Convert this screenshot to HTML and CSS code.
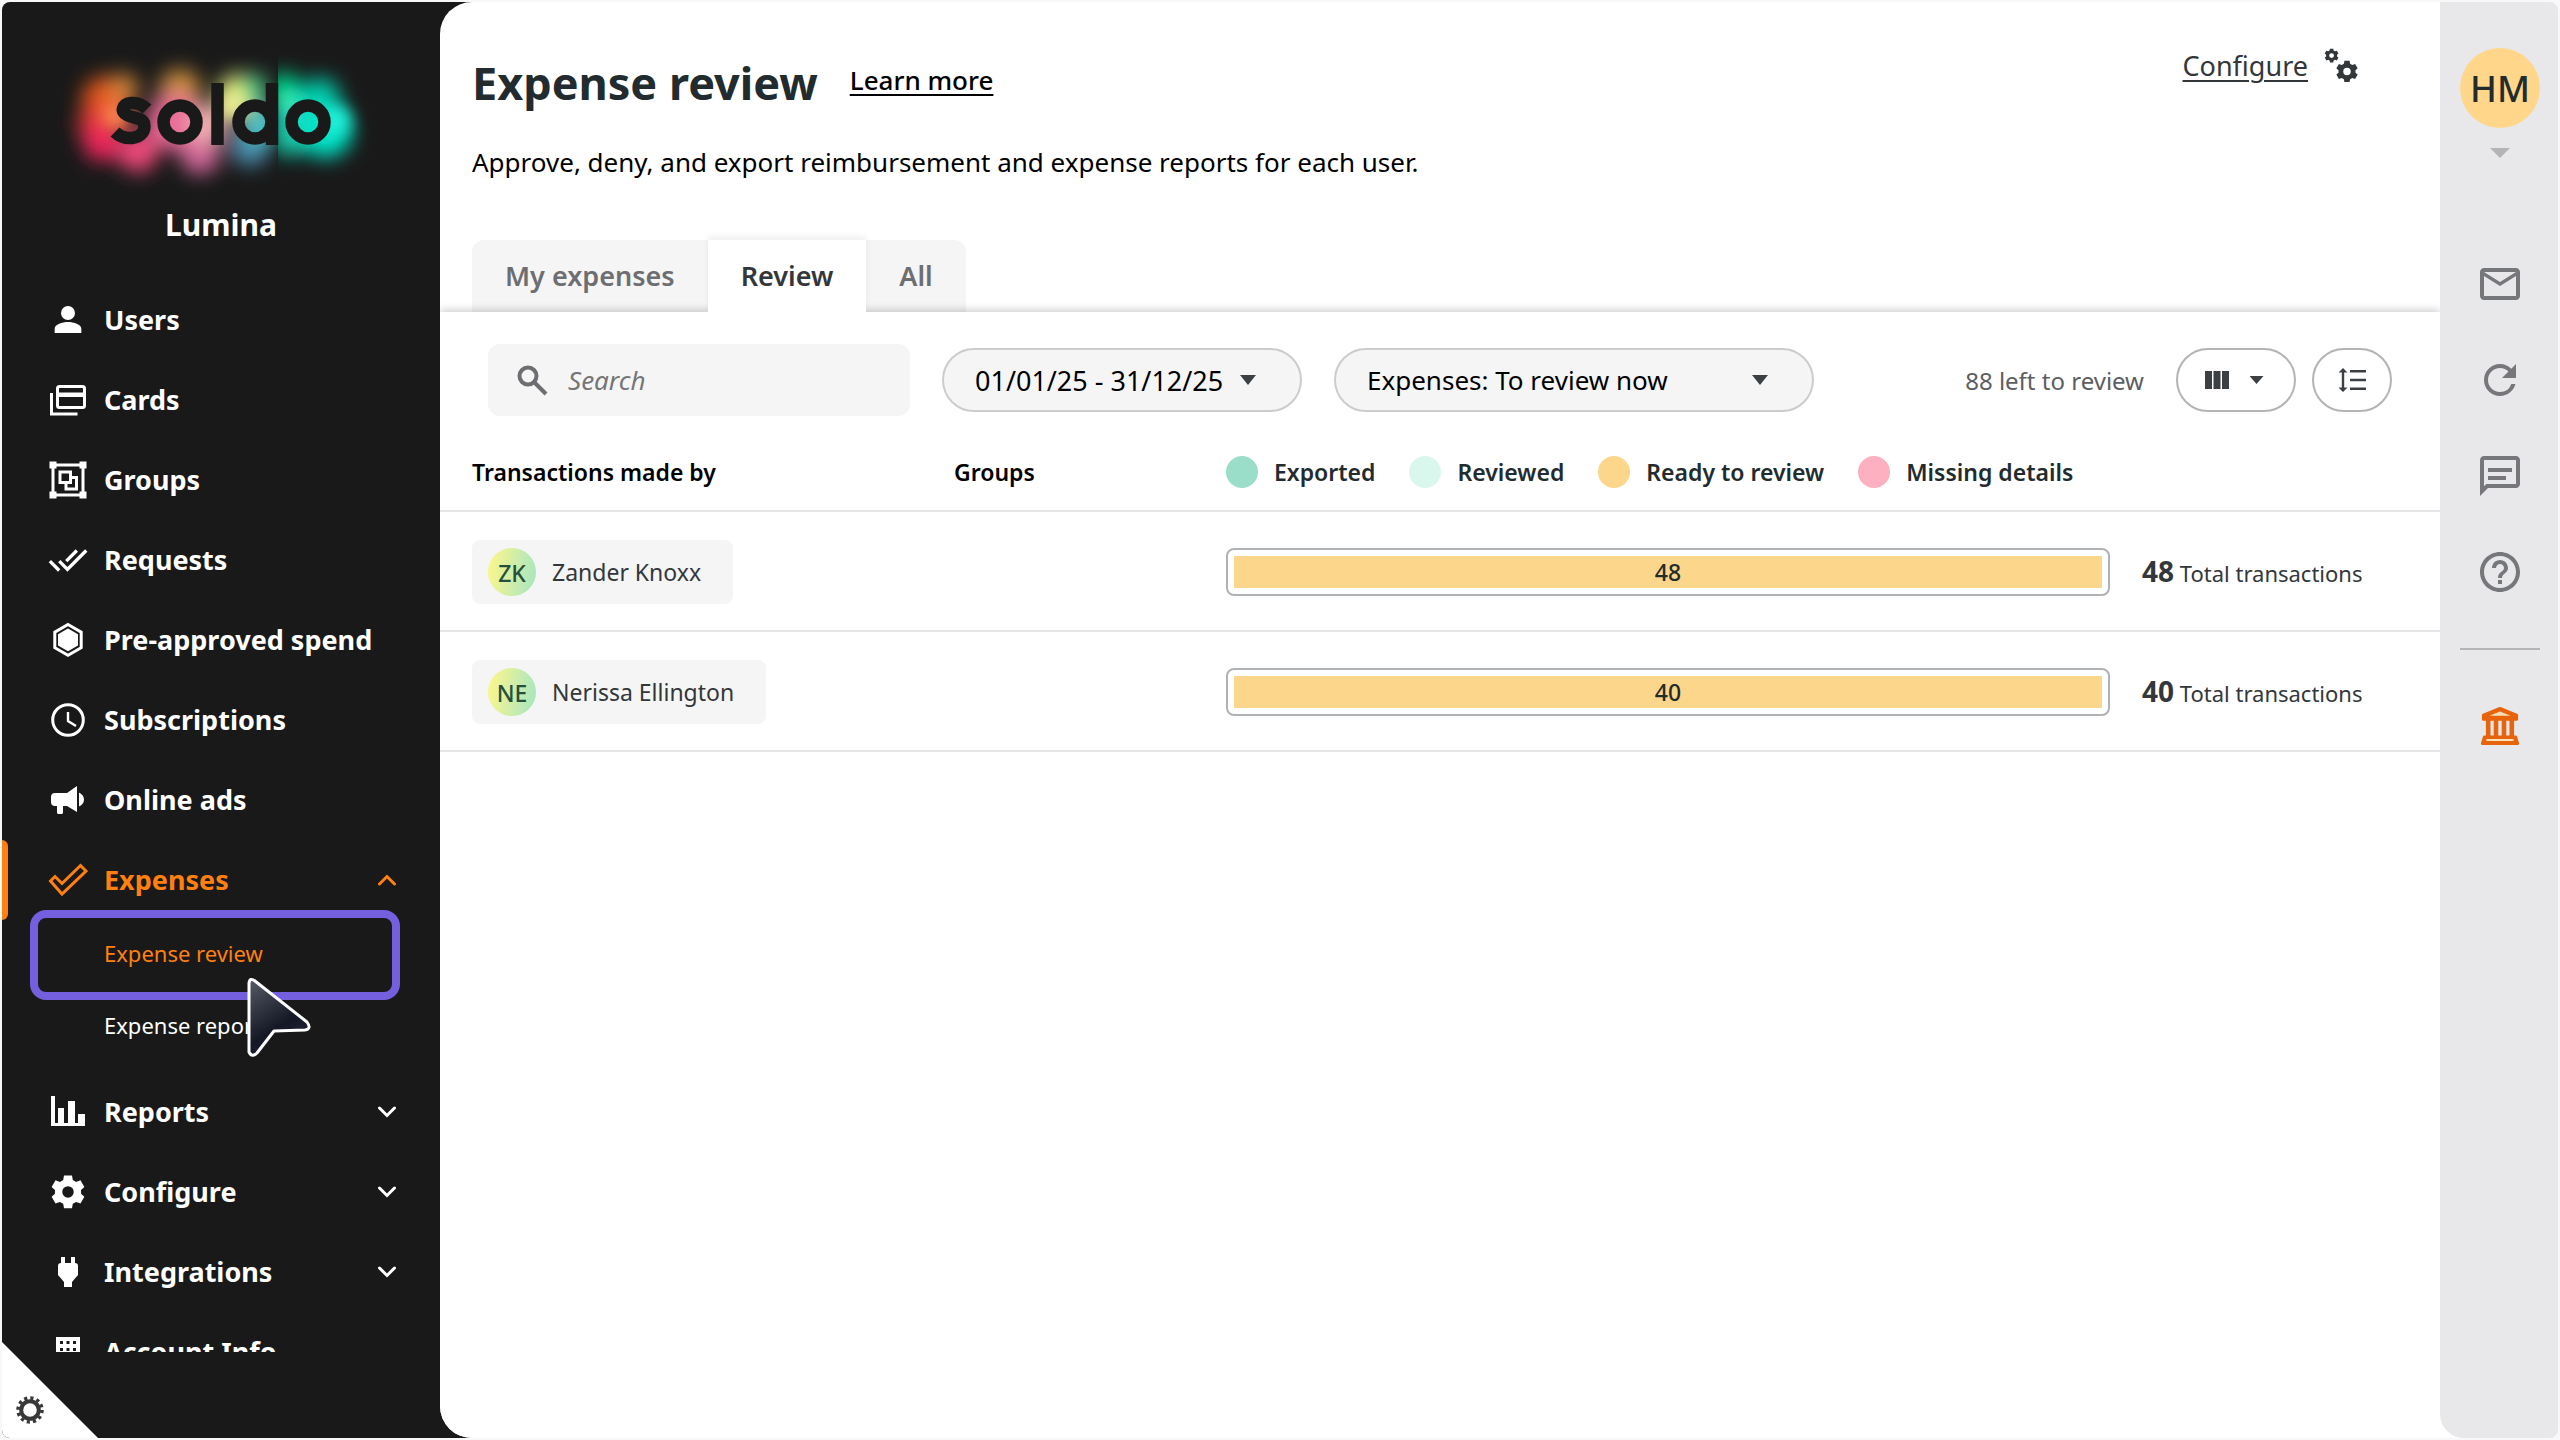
FILE: index.html
```html
<!DOCTYPE html>
<html lang="en">
<head>
<meta charset="utf-8">
<title>Expense review</title>
<link rel="stylesheet" href="styles.css">
</head>
<body>
<div class="app">
  <aside class="sidebar">
    <div class="brand">
      <svg class="logo" viewBox="0 0 320 160" role="img" aria-label="soldo">
        <defs>
          <filter id="glow" x="-50%" y="-50%" width="200%" height="200%"><feGaussianBlur stdDeviation="10"/></filter>
          <filter id="soft" x="-50%" y="-50%" width="200%" height="200%"><feGaussianBlur stdDeviation="8"/></filter>
          <clipPath id="left"><path d="M0 0h222v160H0z"/></clipPath>
          <clipPath id="right"><path d="M222 0h98v160h-98z"/></clipPath>
        </defs>
        <g clip-path="url(#left)"><g filter="url(#glow)">
          <circle cx="50" cy="60" r="24" fill="#e2571a"/>
          <circle cx="42" cy="84" r="20" fill="#e23a30"/>
          <circle cx="68" cy="48" r="14" fill="#d98a3c"/>
          <circle cx="46" cy="102" r="19" fill="#f0285c"/>
          <circle cx="82" cy="112" r="20" fill="#f0487c"/>
          <circle cx="124" cy="50" r="21" fill="#cf8f3e"/>
          <circle cx="144" cy="114" r="20" fill="#d2689a"/>
          <circle cx="118" cy="82" r="28" fill="#ea6a98"/>
          <circle cx="182" cy="54" r="20" fill="#e6f07c"/>
          <circle cx="152" cy="84" r="20" fill="#f2b0b4"/>
          <circle cx="198" cy="48" r="14" fill="#46c884"/>
          <circle cx="194" cy="106" r="20" fill="#4c8cae"/>
          <circle cx="206" cy="84" r="20" fill="#4cc4c8"/>
        </g></g>
        <g clip-path="url(#right)"><g filter="url(#glow)">
          <circle cx="228" cy="50" r="17" fill="#00d68c"/>
          <circle cx="248" cy="82" r="30" fill="#1ce0c8"/>
          <circle cx="264" cy="58" r="20" fill="#00cfae"/>
          <circle cx="270" cy="92" r="26" fill="#00e4c8"/>
          <circle cx="232" cy="100" r="16" fill="#12c8a8"/>
        </g></g>
        <g filter="url(#soft)">
          <circle cx="60" cy="76" r="14" fill="#ff8450"/>
          <circle cx="176" cy="66" r="12" fill="#f4f49a"/>
          <circle cx="280" cy="80" r="14" fill="#24f4dc"/>
          <circle cx="232" cy="62" r="7" fill="#60f4a8"/>
        </g>
        <g fill="none" stroke="#191919" stroke-width="12.500">
          <path d="M91 69c-5-5-11-6.500-16-6-9 1-11 9-4 12 6 3 15 3 17 8 2 8-3 14-12 15-7 .5-13-2-17-6"/>
          <circle cx="124" cy="82" r="16.500"/>
          <circle cx="199" cy="82" r="16.500"/>
          <circle cx="252" cy="82" r="16.500"/>
          <path d="M161.500 43v62M216 43v62"/>
        </g>
      </svg>
      <p class="company">Lumina</p>
    </div>
    <nav class="nav">
      <a class="item" href="#"><svg class="ico" viewBox="0 0 24 24"><path d="M12 12a4.200 4.200 0 1 0 0-8.400 4.200 4.200 0 0 0 0 8.400zM4 19.800v-2.600c0-2.600 4.600-4 8-4s8 1.400 8 4v2.600z"/></svg><span>Users</span></a>
      <a class="item" href="#"><svg class="ico" viewBox="0 0 40 40"><g fill="none" stroke="currentColor" stroke-width="3"><rect x="9.500" y="6.500" width="27" height="21" rx="2"/><path d="M3.500 13v21h26"/></g><path d="M9 12.500h28V17H9z"/></svg><span>Cards</span></a>
      <a class="item" href="#"><svg class="ico" viewBox="0 0 40 40"><path d="M1.500 1.500h7v7h-7zM31.500 1.500h7v7h-7zM1.500 31.500h7v7h-7zM31.500 31.500h7v7h-7z"/><g fill="none" stroke="currentColor" stroke-width="3"><path d="M5 5h30v30H5z"/><path d="M12 12h10.500v10.500H12zM24 17.500h4.500V29H18v-5"/></g></svg><span>Groups</span></a>
      <a class="item" href="#"><svg class="ico" viewBox="0 0 24 24"><path d="M18 7l-1.410-1.410-6.340 6.340 1.410 1.410L18 7zm4.240-1.410L11.660 16.170 7.480 12l-1.410 1.410L11.660 19l12-12-1.420-1.410zM.41 13.410L6 19l1.410-1.410L1.830 12 .41 13.410z"/></svg><span>Requests</span></a>
      <a class="item" href="#"><svg class="ico" viewBox="0 0 40 40"><path d="M20 4.500l13.200 7.600v15.600L20 35.300 6.800 27.700V12.100z" fill="none" stroke="currentColor" stroke-width="3"/><path d="M20 8.500l10 5.800v11.200L20 31.300l-10-5.800V14.300z"/></svg><span>Pre-approved spend</span></a>
      <a class="item" href="#"><svg class="ico" viewBox="0 0 40 40"><g fill="none" stroke="currentColor"><circle cx="20" cy="20" r="15.300" stroke-width="3"/><path d="M20 12v9l8 5" stroke-width="2.400"/></g></svg><span>Subscriptions</span></a>
      <a class="item" href="#"><svg class="ico" viewBox="0 0 40 40"><path d="M7 13h12l10-7v26l-10-6h-4v6.500q0 1.500-1.500 1.500h-3q-1.500 0-1.500-1.500V26H7q-4 0-4-4v-5q0-4 4-4zM31 12.500q5 2.500 5 7t-5 7z"/></svg><span>Online ads</span></a>
      <a class="item active" href="#"><svg class="ico" viewBox="0 0 40 40"><path d="M2.500 21l4.500-4.500 7 7L32.500 5.500 38 11 14 34z" fill="none" stroke="currentColor" stroke-width="3"/></svg><span>Expenses</span><svg class="chev" viewBox="0 0 18 12"><path d="M1.500 10L9 2.500l7.500 7.500"/></svg></a>
      <div class="sub">
        <a class="current" href="#">Expense review</a>
        <a href="#">Expense report</a>
        <div class="focus"></div>
        <svg class="cursor" viewBox="0 0 66 82">
          <defs><linearGradient id="cur" x1="0" y1="0" x2=".5" y2="1"><stop offset="0" stop-color="#565c66"/><stop offset=".7" stop-color="#141724"/><stop offset="1" stop-color="#22263a"/></linearGradient></defs>
          <path d="M3 6q1-6 6-2l52 41q5 7-2 8l-31 1L11 76q-5 5-8-1z" fill="url(#cur)" stroke="#fff" stroke-width="3" stroke-linejoin="round"/>
        </svg>
      </div>
      <a class="item" href="#"><svg class="ico" viewBox="0 0 40 40"><path d="M3 4h4v27h3V16h6v15h4V9h7v22h3v-9h7v12H3z"/></svg><span>Reports</span><svg class="chev" viewBox="0 0 18 12"><path d="M1.500 2L9 9.500 16.500 2"/></svg></a>
      <a class="item" href="#"><svg class="ico" viewBox="0 0 40 40"><use href="#gear6"/></svg><span>Configure</span><svg class="chev" viewBox="0 0 18 12"><path d="M1.500 2L9 9.500 16.500 2"/></svg></a>
      <a class="item" href="#"><svg class="ico" viewBox="0 0 40 40"><path d="M13 5h4v6h6V5h4v6q3 0 3 3v9l-6 7v5h-8v-5l-6-7v-9q0-3 3-3z"/></svg><span>Integrations</span><svg class="chev" viewBox="0 0 18 12"><path d="M1.500 2L9 9.500 16.500 2"/></svg></a>
      <a class="item" href="#"><svg class="ico" viewBox="0 0 40 40"><path fill-rule="evenodd" d="M8 5h24v32H8zM12 9v3h3V9zM18.500 9v3h3V9zM25 9v3h3V9zM12 16v3h3v-3zM18.500 16v3h3v-3zM25 16v3h3v-3z"/></svg><span>Account Info</span></a>
    </nav>
    <button class="corner" aria-label="Settings">
      <svg viewBox="0 0 28 28"><circle cx="14" cy="14" r="8.800" fill="none" stroke="#383838" stroke-width="4"/><circle cx="14" cy="14" r="12" fill="none" stroke="#383838" stroke-width="3.500" stroke-dasharray="3.140 3.140"/></svg>
    </button>
  </aside>

  <main class="main">
    <header class="head">
      <div class="intro">
        <div class="title-row">
          <h1>Expense review</h1>
          <a class="learn" href="#">Learn more</a>
        </div>
        <p>Approve, deny, and export reimbursement and expense reports for each user.</p>
      </div>
      <a class="configure" href="#"><span>Configure</span>
        <svg viewBox="0 0 36 36"><defs><path id="gear6" fill-rule="evenodd" d="M15.700 3.300h8.600l.9 4.800 3.600 2.100 4.700-1.700 4.200 7.300-3.600 3.100v4.200l3.600 3.100-4.200 7.300-4.700-1.700-3.600 2.100-.9 4.800h-8.600l-.9-4.800-3.600-2.100-4.700 1.700-4.200-7.300 3.600-3.100v-4.200l-3.600-3.100 4.200-7.300 4.700 1.700 3.600-2.100zM20 14.800a6.200 6.200 0 1 0 0 12.400 6.200 6.200 0 0 0 0-12.400z" transform="translate(1.500 .5) scale(.925)"/></defs><use href="#gear6" transform="translate(-.8 -.8) scale(.42)"/><use href="#gear6" transform="translate(10 10.500) scale(.65)"/></svg>
      </a>
    </header>
    <div class="tabs">
      <button>My expenses</button>
      <button class="on">Review</button>
      <button>All</button>
    </div>
    <section class="panel">
      <div class="toolbar">
        <label class="search">
          <svg viewBox="0 0 32 32"><circle cx="12" cy="12" r="8.500"/><path d="M18 18l12 12"/></svg>
          <input type="text" placeholder="Search" aria-label="Search">
        </label>
        <button class="pill date">01/01/25 - 31/12/25<i class="tri"></i></button>
        <button class="pill wide">Expenses: To review now<i class="tri"></i></button>
        <span class="left">88 left to review</span>
        <button class="ghost cols" aria-label="Columns"><svg viewBox="0 0 24 18"><path d="M0 0h7v18H0zM8.500 0h7v18h-7zM17 0h7v18h-7z"/></svg><i class="tri small"></i></button>
        <button class="ghost" aria-label="Row height"><svg class="rows" viewBox="0 0 28 24"><path d="M5 0l4.500 4.500H6.200v15h3.300L5 24 .5 19.500h3.300v-15H.5zM12 2h16v2.500H12zM12 10.800h16v2.500H12zM12 19.500h16V22H12z"/></svg></button>
      </div>
      <table>
        <colgroup><col class="c1"><col class="c2"><col><col class="c4"></colgroup>
        <thead>
          <tr>
            <th>Transactions made by</th>
            <th>Groups</th>
            <th colspan="2">
              <div class="legend">
                <span><i class="dot exported"></i>Exported</span>
                <span><i class="dot reviewed"></i>Reviewed</span>
                <span><i class="dot ready"></i>Ready to review</span>
                <span><i class="dot missing"></i>Missing details</span>
              </div>
            </th>
          </tr>
        </thead>
        <tbody>
          <tr>
            <td><a class="chip" href="#"><b>ZK</b>Zander Knoxx</a></td>
            <td></td>
            <td><div class="bar"><div style="width:100%">48</div></div></td>
            <td class="total"><strong>48</strong> Total transactions</td>
          </tr>
          <tr>
            <td><a class="chip" href="#"><b>NE</b>Nerissa Ellington</a></td>
            <td></td>
            <td><div class="bar"><div style="width:100%">40</div></div></td>
            <td class="total"><strong>40</strong> Total transactions</td>
          </tr>
        </tbody>
      </table>
    </section>
  </main>

  <aside class="rail">
    <button class="me">HM</button>
    <i class="tri pale"></i>
    <div class="tools">
      <button aria-label="Messages"><svg viewBox="0 0 24 24"><path d="M22 6c0-1.100-.9-2-2-2H4c-1.100 0-2 .9-2 2v12c0 1.100.9 2 2 2h16c1.100 0 2-.9 2-2V6zm-2 0l-8 5-8-5h16zm0 12H4V8l8 5 8-5v10z"/></svg></button>
      <button aria-label="Refresh"><svg viewBox="0 0 24 24"><path d="M17.650 6.350A7.958 7.958 0 0 0 12 4c-4.420 0-7.990 3.580-7.990 8s3.570 8 7.990 8c3.730 0 6.840-2.550 7.730-6h-2.080A5.990 5.990 0 0 1 12 18c-3.310 0-6-2.690-6-6s2.690-6 6-6c1.660 0 3.140.69 4.220 1.780L13 11h7V4l-2.350 2.350z"/></svg></button>
      <button aria-label="Chat"><svg viewBox="0 0 24 24"><path d="M4 4h16v12H5.170L4 17.170V4m0-2c-1.100 0-1.990.9-1.990 2L2 22l4-4h14c1.100 0 2-.9 2-2V4c0-1.100-.9-2-2-2H4zm2 10h9v2H6v-2zm0-4h12v2H6V8z"/></svg></button>
      <button aria-label="Help"><svg viewBox="0 0 24 24"><path d="M11 18h2v-2h-2v2zm1-16C6.480 2 2 6.480 2 12s4.480 10 10 10 10-4.480 10-10S17.520 2 12 2zm0 18c-4.410 0-8-3.590-8-8s3.590-8 8-8 8 3.590 8 8-3.590 8-8 8zm0-14c-2.210 0-4 1.790-4 4h2c0-1.100.9-2 2-2s2 .9 2 2c0 2-3 1.750-3 5h2c0-2.250 3-2.500 3-5 0-2.210-1.790-4-4-4z"/></svg></button>
    </div>
    <hr>
    <button class="bank" aria-label="Bank"><svg viewBox="0 0 40 40"><g stroke="#e8640c" stroke-width="3.200" stroke-linejoin="round"><path d="M3.500 9.200L20 2.600l16.500 6.600v4h-33z" fill="#e8640c"/><path d="M8.200 13v17M16 13v17M24 13v17M31.800 13v17" stroke-width="4.600"/><path d="M4.500 31h31l2 6.400h-35z" fill="#e8640c"/></g><path d="M9.500 9.800L20 5.600l10.500 4.200zM6.500 33h27v2h-27z" fill="#fbdfb8"/></svg></button>
  </aside>
</div>
</body>
</html>
```
FILE: styles.css
```css
* { box-sizing: border-box; }

body {
  margin: 0;
  background: #f8f8f8;
  color: #33373a;
  font-family: "Noto Sans", "Open Sans", sans-serif;
  font-size: 24px;
}

button, input { font: inherit; color: inherit; }
button { padding: 0; border: 0; background: none; }
a { color: inherit; text-decoration: none; }
i { font-style: normal; }
svg { display: block; flex: none; }

.app {
  display: grid;
  grid-template-columns: 438px 1fr 118px;
  height: calc(100vh - 4px);
  margin: 2px;
  border-radius: 8px;
  overflow: hidden;
  background: linear-gradient(90deg, #191919 50%, #fff 50%);
}

/* Sidebar */
.sidebar {
  position: relative;
  display: flex;
  flex-direction: column;
  min-height: 0;
  padding-bottom: 86px;
  color: #fff;
}
.brand { flex: none; height: 278px; padding-top: 38px; }
.logo { width: 320px; height: 160px; margin: 0 auto 0 54px; }
.company {
  margin: 7px 0 0;
  font-size: 30px;
  line-height: 36px;
  font-weight: 700;
  text-align: center;
}
.nav { flex: 1; min-height: 0; overflow: hidden; }
.item {
  display: flex;
  align-items: center;
  height: 80px;
  padding: 0 44px 0 46px;
  font-size: 27px;
  font-weight: 700;
}
.item span { flex: 1; margin-left: 16px; padding-bottom: 2px; }
.ico { width: 40px; height: 40px; fill: currentColor; }
.chev { width: 18px; height: 12px; fill: none; stroke: currentColor; stroke-width: 3; stroke-linecap: round; }
.active {
  position: relative;
  color: #ff8010;
}
.active::before {
  content: "";
  position: absolute;
  left: 0;
  width: 6px;
  height: 100%;
  border-radius: 0 6px 6px 0;
  background: #ff8010;
}
.sub { position: relative; padding-bottom: 8px; }
.sub a {
  display: flex;
  align-items: center;
  height: 72px;
  padding: 0 0 6px 102px;
  font-size: 22px;
}
.sub .current { color: #ff8010; }
.focus {
  position: absolute;
  top: -10px;
  left: 28px;
  width: 370px;
  height: 90px;
  border: 8px solid #745fde;
  border-radius: 16px;
}
.cursor { position: absolute; top: 57px; left: 244px; width: 66px; height: 82px; }
.corner {
  position: absolute;
  left: 0;
  bottom: 0;
  width: 96px;
  height: 96px;
  background: #fff;
  clip-path: polygon(0 0, 100% 100%, 0 100%);
}
.corner svg { width: 28px; height: 28px; margin: 40px 0 0 14px; }

/* Main */
.main {
  display: flex;
  flex-direction: column;
  border-radius: 32px 0 0 32px;
  background: #fff;
  overflow: hidden;
}
.head {
  display: flex;
  justify-content: space-between;
  height: 238px;
  padding: 46px 80px 0 32px;
}
.title-row { display: flex; align-items: center; gap: 32px; }
h1 { margin: 0; color: #222b2e; font-size: 45px; line-height: 70px; font-weight: 700; }
.learn { padding-bottom: 6px; color: #000; font-size: 26px; font-weight: 500; text-decoration: underline; text-decoration-thickness: 2px; text-underline-offset: 4px; }
.head p { margin: 24px 0 0; color: #000; font-size: 26px; line-height: 40px; }
.configure { display: flex; gap: 16px; height: 40px; line-height: 36px; font-size: 27px; }
.configure span { text-decoration: underline; text-decoration-thickness: 2px; text-underline-offset: 4px; }
.configure svg { width: 36px; height: 36px; fill: #33373a; }

.tabs { display: flex; height: 72px; padding-left: 32px; }
.tabs button {
  padding: 0 33px 2px;
  background: #f5f5f5;
  color: #6d6e72;
  font-size: 27px;
  font-weight: 600;
}
.tabs button:first-child { border-top-left-radius: 12px; }
.tabs button:last-child { border-top-right-radius: 12px; }
.tabs .on { position: relative; z-index: 2; background: #fff; color: #33373a; box-shadow: 0 -4px 6px rgba(0, 0, 0, .06); }
.panel { position: relative; flex: 1; z-index: 1; background: #fff; box-shadow: 0 -2px 8px rgba(0, 0, 0, .2); }

.toolbar { display: flex; align-items: center; height: 136px; padding: 0 48px; }
.search {
  display: flex;
  align-items: center;
  gap: 18px;
  width: 422px;
  height: 72px;
  padding-left: 28px;
  border-radius: 12px;
  background: #f5f5f5;
}
.search svg { width: 32px; height: 32px; fill: none; stroke: #6d6e72; stroke-width: 4; }
.search input { width: 300px; border: 0; background: none; outline: 0; font-size: 26px; }
.search input::placeholder { color: #757578; font-style: italic; opacity: 1; }
.pill {
  display: flex;
  align-items: center;
  justify-content: space-between;
  width: 360px;
  height: 64px;
  margin-left: 32px;
  padding: 0 44px 0 31px;
  border: 2px solid #ccc;
  border-radius: 32px;
  background: #f5f5f5;
  color: #000;
  font-size: 26px;
}
.date { font-size: 27px; }
.wide { width: 480px; }
.tri { flex: none; width: 16px; height: 10px; background: #3c4043; clip-path: polygon(0 0, 100% 0, 50% 100%); }
.small { width: 14px; height: 8px; }
.left { margin-left: auto; color: #5c5e61; }
.ghost {
  display: flex;
  align-items: center;
  justify-content: center;
  width: 80px;
  height: 64px;
  margin-left: 16px;
  border: 2px solid #b4b4b4;
  border-radius: 32px;
}
.cols { gap: 21px; width: 120px; margin-left: 32px; padding-right: 4px; }
.cols svg { width: 24px; height: 18px; fill: #3c4043; }
.rows { width: 28px; height: 28px; fill: #3c4043; }

table { width: 100%; table-layout: fixed; border-collapse: separate; border-spacing: 0; }
.c1 { width: 514px; }
.c2 { width: 272px; }
.c4 { width: 330px; }
th, td { padding: 0; border-bottom: 2px solid #e6e6e6; text-align: left; }
th { height: 64px; padding-bottom: 14px; color: #000; font-size: 23px; font-weight: 600; }
td { height: 120px; padding-top: 2px; }
th:first-child, td:first-child { padding-left: 32px; }
.legend { display: flex; gap: 34px; color: #222b2e; }
.legend span { display: flex; align-items: center; gap: 16px; }
.dot { width: 32px; height: 32px; border-radius: 50%; }
.exported { background: #9adeca; }
.reviewed { background: #daf7ee; }
.ready { background: #fcd68a; }
.missing { background: #fcb0c0; }
.chip {
  display: inline-flex;
  align-items: center;
  gap: 16px;
  height: 64px;
  padding: 0 32px 0 16px;
  border-radius: 8px;
  background: #f5f5f5;
  font-size: 23px;
  vertical-align: middle;
}
.chip b {
  width: 48px;
  height: 48px;
  border-radius: 50%;
  background: linear-gradient(100deg, #f8f68e 10%, #c4ebb0 65%, #a4e6c0);
  color: #24503c;
  font-size: 23px;
  line-height: 50px;
  font-weight: 500;
  text-align: center;
}
.bar { height: 48px; padding: 6px; border: 2px solid #b0b3b6; border-radius: 8px; }
.bar div { height: 32px; background: #fcd68a; color: #222b2e; font-size: 23px; line-height: 32px; font-weight: 500; text-align: center; }
.total { padding: 0 0 0 32px; font-size: 22px; white-space: nowrap; }
.total strong { font-size: 28px; }

/* Right rail */
.rail {
  display: flex;
  flex-direction: column;
  align-items: center;
  padding: 46px 0 0 2px;
  border-bottom-left-radius: 24px;
  background: #e8e8ea;
}
.me { width: 80px; height: 80px; border-radius: 50%; background: #ffd68a; color: #222b2e; font-size: 36px; font-weight: 500; }
.pale { width: 20px; margin-top: 20px; background: #b4b4b6; }
.tools { display: grid; gap: 48px; margin-top: 102px; }
.tools svg { width: 48px; height: 48px; fill: #75777b; }
.rail hr { width: 80px; height: 2px; margin: 52px 0 0; border: 0; background: #b4b5b8; }
.bank { margin-top: 56px; }
.bank svg { width: 40px; height: 40px; }
```
